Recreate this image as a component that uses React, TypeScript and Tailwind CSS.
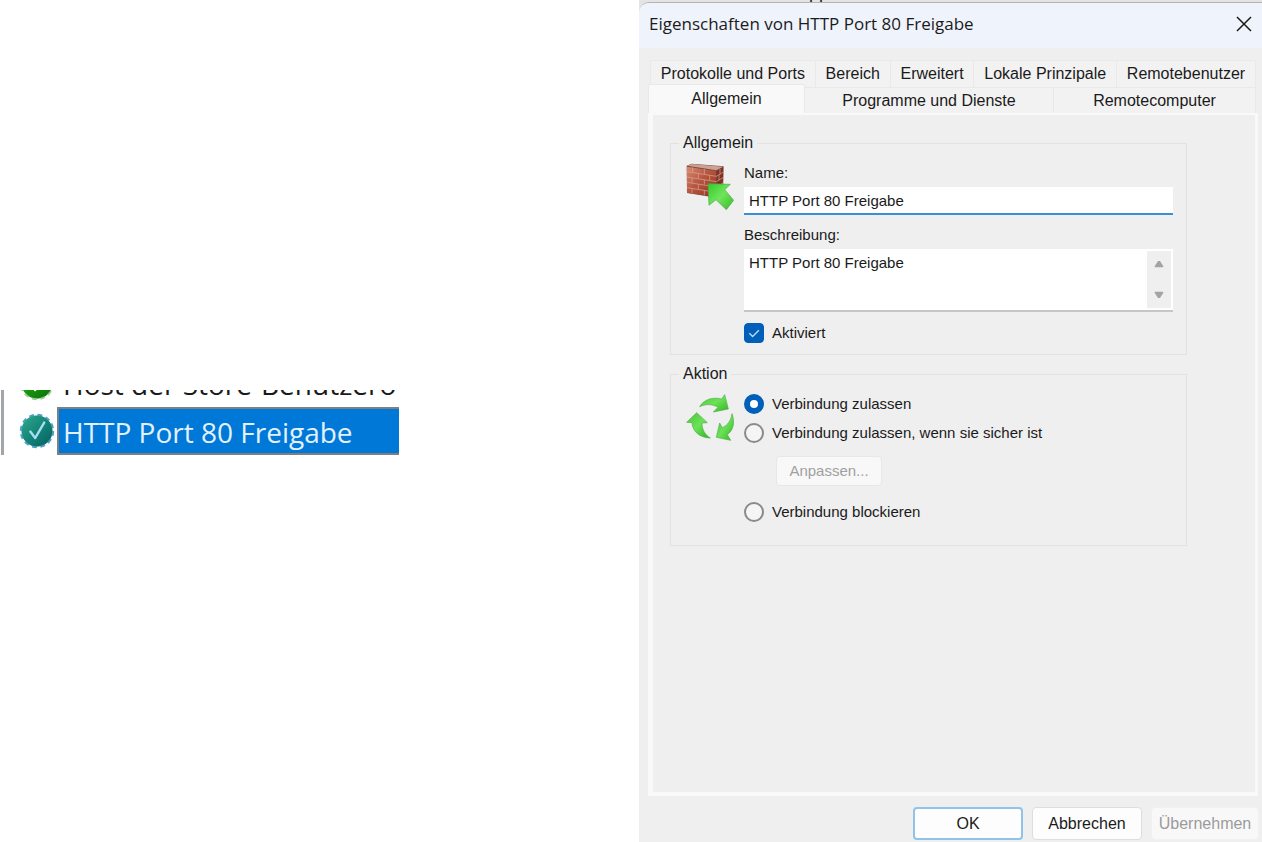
import { useState, type ReactNode } from "react";

function SealIcon({ selected }: { selected?: boolean }) {
  const id = selected ? "seal-selected" : "seal-plain";
  return (
    <svg viewBox="0 0 36 36" className="size-9 shrink-0" aria-hidden="true">
      <defs>
        <linearGradient id={id} x1="0" y1="0" x2="1" y2="1">
          <stop offset="0" stopColor={selected ? "#2fa98b" : "#4fc83c"} />
          <stop offset="0.5" stopColor={selected ? "#138577" : "#17940f"} />
          <stop offset="1" stopColor={selected ? "#07605f" : "#0a6e06"} />
        </linearGradient>
      </defs>
      <circle
        cx="18"
        cy="18"
        r="15.5"
        fill={`url(#${id})`}
        stroke={selected ? "#4d9fc4" : "#9ccf95"}
        strokeWidth="3.4"
        strokeDasharray="4.6 3.52"
      />
      <circle cx="18" cy="18" r="15.2" fill={`url(#${id})`} />
      <path
        d="M11.3 18.6 16.2 25 25.2 9.6"
        fill="none"
        stroke={selected ? "#a9dcf2" : "#ffffff"}
        strokeWidth="2.4"
        strokeLinecap="round"
        strokeLinejoin="round"
      />
    </svg>
  );
}

function FirewallIcon() {
  return (
    <svg viewBox="78 98 147 147" className="size-[49px] shrink-0" aria-hidden="true">
      <defs>
        <linearGradient id="brick" x1="0" y1="0" x2="1" y2="1">
          <stop offset="0" stopColor="#d98a70" />
          <stop offset="0.45" stopColor="#b9553e" />
          <stop offset="1" stopColor="#8f3323" />
        </linearGradient>
        <linearGradient id="entry" x1="0" y1="0" x2="1" y2="1">
          <stop offset="0" stopColor="#35c92a" />
          <stop offset="0.5" stopColor="#6fe55c" />
          <stop offset="1" stopColor="#38b82b" />
        </linearGradient>
      </defs>
      <path d="M83 106 98 100 194 108 192 190 172 202 84 188Z" fill="#7a4a40" />
      <path d="M84 106 98 101 193 109 172 120Z" fill="#c9a294" />
      <path d="M84 109 171 122V200L84 187Z" fill="url(#brick)" />
      <path d="M173 121 192 111 191 190 173 200Z" fill="#813022" />
      <path
        d="M84 124 172 138 192 126M84 140 172 154 192 142M84 156 172 170 192 158M84 172 172 186 192 174M101 111V126M136 116V132M118 130V145M152 135V150M99 143V158M136 149V163M118 162V177M99 175V189M136 180V195M183 116V132M180 134V150"
        fill="none"
        stroke="#d3a393"
        strokeWidth="2.2"
      />
      <path d="M147 160 214 162 197 178 224 210 202 238 171 208 150 225Z" fill="url(#entry)" stroke="#4bab42" strokeWidth="2" strokeLinejoin="round" />
    </svg>
  );
}

function CycleIcon() {
  return (
    <svg viewBox="78 101 147 147" className="size-[49px] shrink-0" aria-hidden="true">
      <defs>
        <linearGradient id="cycle" x1="0" y1="0" x2="1" y2="1">
          <stop offset="0" stopColor="#49c43b" />
          <stop offset="0.5" stopColor="#6be257" />
          <stop offset="1" stopColor="#31b324" />
        </linearGradient>
      </defs>
      <g fill="url(#cycle)" stroke="#4fae45" strokeWidth="2" strokeLinejoin="round">
        <path d="M122 139C134 118 160 109 188 116L197 103 208 146 163 155 177 141C160 131 141 130 122 139Z" />
        <path d="M113 157 145 187 129 188C129 208 138 223 154 233C122 232 101 214 99 187L83 186Z" />
        <path d="M219 160C229 188 222 211 205 223L215 240 172 231 182 188 190 202C207 194 216 180 219 160Z" />
      </g>
    </svg>
  );
}

const backTabs = ["Protokolle und Ports", "Bereich", "Erweitert", "Lokale Prinzipale", "Remotebenutzer"];

function Group({ title, icon, className, children }: { title: string; icon: ReactNode; className: string; children: ReactNode }) {
  return (
    <fieldset className={`ml-[17px] mr-[68px] border border-[#e2e2e2] pl-2 ${className}`}>
      <legend className="px-1">{title}</legend>
      <div className="flex gap-[10px] pl-[6px] pr-[13px] pt-[10px] text-[15px]">
        {icon}
        <div className="min-w-0 flex-1">{children}</div>
      </div>
    </fieldset>
  );
}

function Radio({ label, checked, onChange }: { label: string; checked: boolean; onChange: () => void }) {
  return (
    <label className="flex w-fit items-center gap-2">
      <input
        type="radio"
        name="action"
        checked={checked}
        onChange={onChange}
        className="size-5 shrink-0 appearance-none rounded-full border-2 border-[#8a8a8a] bg-[#f5f5f5] checked:border-[6px] checked:border-[#005fb8] checked:bg-white"
      />
      {label}
    </label>
  );
}

function PropertiesDialog() {
  const [action, setAction] = useState(0);
  const tab = "border-r border-t border-[#e9e9e9] bg-[#f2f2f2]";
  return (
    <section
      aria-label="Eigenschaften von HTTP Port 80 Freigabe"
      className="flex flex-1 flex-col overflow-hidden rounded-tl-[10px] border-t border-t-[#b4b4b4] bg-[#efefef]"
    >
      <header className="flex h-[45px] shrink-0 items-center justify-between bg-[#eff3fb] pb-1 pl-[10px] pr-2 font-['Open_Sans','Noto_Sans',sans-serif] text-[17px] text-[#1b1b1b]">
        <h1>Eigenschaften von HTTP Port 80 Freigabe</h1>
        <button type="button" aria-label="Schließen" className="p-0.5">
          <svg viewBox="0 0 16 16" className="size-4" fill="none" stroke="#1b1b1b" strokeWidth="1.5" aria-hidden="true">
            <path d="M1 1 15 15M15 1 1 15" />
          </svg>
        </button>
      </header>

      <div className="flex flex-1 flex-col pl-[9px] pr-1 pt-3">
        <div role="tablist" className="pr-0.5">
          <div className="ml-[2px] flex border-l border-[#e9e9e9]">
            {backTabs.map((name) => (
              <button key={name} type="button" role="tab" aria-selected={false} className={`${tab} h-[27px] flex-auto whitespace-nowrap px-1`}>
                {name}
              </button>
            ))}
          </div>
          <div className="grid grid-cols-[157fr_249fr_202fr]">
            <button type="button" role="tab" aria-selected={true} className="-mb-px -mt-[3px] border-l border-r border-t border-[#e9e9e9] bg-[#f9f9f9] pb-0.5">
              Allgemein
            </button>
            <button type="button" role="tab" aria-selected={false} className={`${tab} h-[26px]`}>
              Programme und Dienste
            </button>
            <button type="button" role="tab" aria-selected={false} className={`${tab} h-[26px]`}>
              Remotecomputer
            </button>
          </div>
        </div>

        <div role="tabpanel" className="flex-1 border-b-4 border-l-[5px] border-r-[3px] border-t-2 border-[#f9f9f9] pt-[18px]">
          <Group title="Allgemein" icon={<FirewallIcon />} className="pb-[11px]">
            <label htmlFor="rule-name" className="mb-1 block">
              Name:
            </label>
            <input
              id="rule-name"
              type="text"
              defaultValue="HTTP Port 80 Freigabe"
              className="block h-7 w-full border-b-2 border-[#3a8ed8] bg-white px-[5px] outline-none"
            />
            <label htmlFor="rule-description" className="mb-1 mt-[10px] block">
              Beschreibung:
            </label>
            <div className="flex h-[63px] border-b-2 border-[#c6c6c6] bg-white py-0.5 pr-0.5">
              <textarea
                id="rule-description"
                defaultValue="HTTP Port 80 Freigabe"
                className="min-w-0 flex-1 resize-none overflow-hidden px-[5px] pt-0.5 outline-none"
              />
              <div className="flex w-6 flex-col items-center justify-between bg-[#efefef] py-[9px]">
                <button type="button" aria-label="Nach oben">
                  <svg viewBox="0 0 10 8" className="h-2 w-[10px]" fill="#a3a3a3" aria-hidden="true">
                    <path d="M4 1h2l3.5 5.5-.7.8H1.200l-.7-.8Z" />
                  </svg>
                </button>
                <button type="button" aria-label="Nach unten">
                  <svg viewBox="0 0 10 8" className="h-2 w-[10px]" fill="#a3a3a3" aria-hidden="true">
                    <path d="M4 7h2l3.5-5.500-.7-.8H1.200l-.7.8Z" />
                  </svg>
                </button>
              </div>
            </div>
            <label className="mt-[11px] flex w-fit items-center gap-2">
              <span className="grid size-5">
                <input type="checkbox" defaultChecked className="peer col-start-1 row-start-1 size-5 appearance-none rounded border border-[#8a8a8a] checked:border-[#005fb8] checked:bg-[#005fb8]" />
                <svg viewBox="0 0 20 20" className="pointer-events-none col-start-1 row-start-1 size-5 opacity-0 peer-checked:opacity-100" fill="none" stroke="#b9d9f5" strokeWidth="1.4" aria-hidden="true">
                  <path d="M5.300 10.300 8.600 13.500 14.900 7.200" />
                </svg>
              </span>
              Aktiviert
            </label>
          </Group>

          <Group title="Aktion" icon={<CycleIcon />} className="mt-[9px] pb-[23px]">
            <div className="flex flex-col gap-[9px]">
              <Radio label="Verbindung zulassen" checked={action === 0} onChange={() => setAction(0)} />
              <Radio label="Verbindung zulassen, wenn sie sicher ist" checked={action === 1} onChange={() => setAction(1)} />
            </div>
            <button type="button" disabled className="mb-4 ml-8 mt-[13px] block h-[30px] w-[106px] rounded border border-[#e7e7e7] bg-[#f8f8f8] text-[#a0a0a0]">
              Anpassen...
            </button>
            <Radio label="Verbindung blockieren" checked={action === 2} onChange={() => setAction(2)} />
          </Group>
        </div>
      </div>

      <footer className="flex justify-end gap-[9px] pb-0.5 pr-[3px] pt-[11px]">
        <button type="button" className="h-[33px] w-[110px] rounded border-2 border-[#8fc3eb] bg-[#fdfdfd]">
          OK
        </button>
        <button type="button" className="h-[33px] w-[110px] rounded border border-[#dedede] bg-[#fdfdfd]">
          Abbrechen
        </button>
        <button type="button" disabled className="h-[33px] w-[108px] rounded border border-[#f1f1f1] bg-[#f8f8f8] text-[#9b9b9b]">
          Übernehmen
        </button>
      </footer>
    </section>
  );
}

export default function App() {
  return (
    <main className="grid min-h-screen grid-cols-[639fr_623fr] bg-white font-['Liberation_Sans',Arial,sans-serif] text-[16px] leading-5 text-[#1a1a1a]">
      <div className="flex items-center pt-[3px]">
        <ul className="ml-px flex h-[65px] w-[398px] flex-col justify-end overflow-hidden border-l-[3px] border-[#a2a6ab] font-['Open_Sans','Noto_Sans',sans-serif] text-[28px] leading-10">
          <li className="flex h-12 shrink-0 items-center gap-0.5 pl-[15px]">
            <SealIcon />
            <span className="flex h-12 flex-1 items-center overflow-hidden whitespace-nowrap border-2 border-transparent pl-1 pt-0.5">Host der Store-Benutzeroberfläche</span>
          </li>
          <li className="flex h-12 shrink-0 items-center gap-0.5 pl-[15px]">
            <SealIcon selected />
            <span className="flex h-12 flex-1 items-center whitespace-nowrap border-y-2 border-l-2 border-[#7d7f80] bg-[#0078d7] pl-1 pt-0.5 text-[#e3f1fd]">HTTP Port 80 Freigabe</span>
          </li>
        </ul>
      </div>
      <div className="flex flex-col bg-[#e4e4e2]">
        <div className="flex h-0.5 shrink-0 items-end overflow-hidden pl-[170px]" aria-hidden="true">
          <span className="text-[18px] leading-5">pp</span>
        </div>
        <PropertiesDialog />
      </div>
    </main>
  );
}
